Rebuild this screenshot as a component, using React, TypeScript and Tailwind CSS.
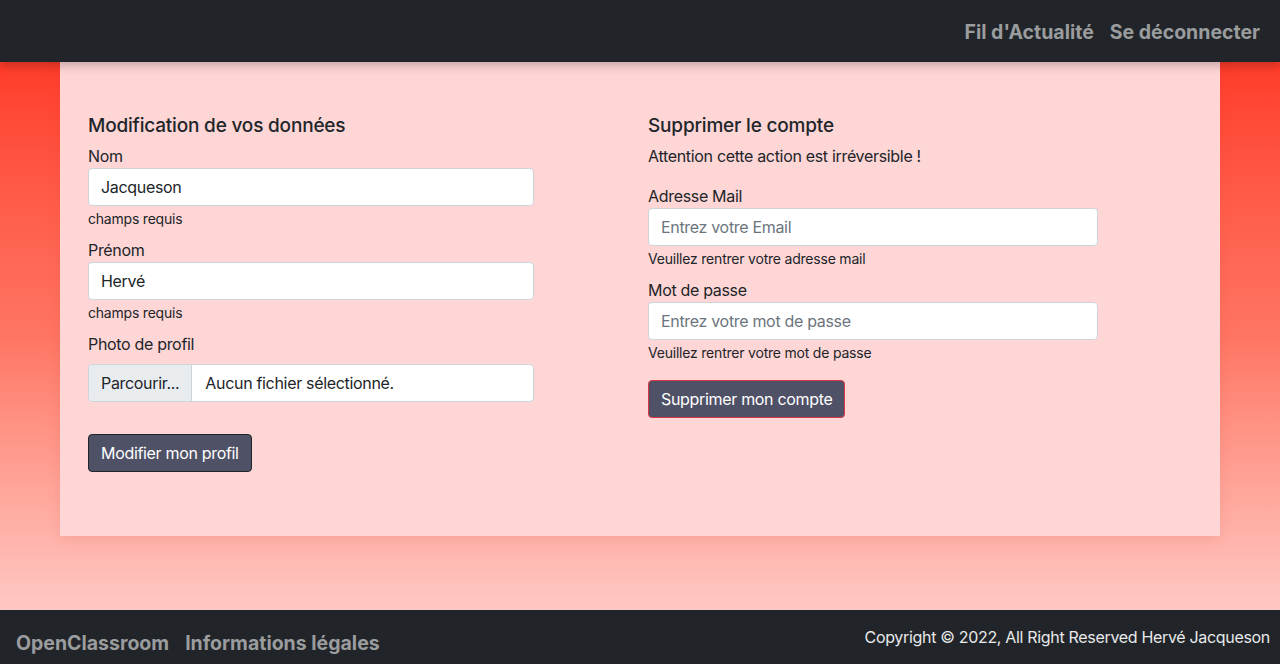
import { useState } from 'react';

const inputCls =
  'block h-[38px] w-full px-3 bg-white border border-[#ced4da] rounded-[4px] text-[16px] tracking-[-0.02em] text-[#212529] placeholder:text-[#6c757d] outline-none';

function Field({ label, help, children, gap = 'mt-[9px]' }: { label: string; help?: string; children: React.ReactNode; gap?: string }) {
  return (
    <div className={gap}>
      <label className="block text-[16px] leading-6 tracking-[-0.02em] text-[#212529]">{label}</label>
      {children}
      {help && <small className="block mt-[2px] text-[14px] leading-[21px] tracking-[-0.015em] text-[#212529]">{help}</small>}
    </div>
  );
}

export default function App() {
  const [nom, setNom] = useState('Jacqueson');
  const [prenom, setPrenom] = useState('Hervé');
  const [email, setEmail] = useState('');
  const [password, setPassword] = useState('');

  return (
    <div className="flex flex-col h-screen font-['Inter','Noto_Sans',sans-serif]">
      <nav className="relative z-10 h-[62px] shrink-0 bg-[#212529] flex items-center justify-end pr-5 pt-1 gap-4 shadow-[0_3px_10px_rgba(0,0,0,0.25)]">
        <a className="text-[19.5px] font-bold text-[#9a9c9e]">Fil d'Actualité</a>
        <a className="text-[19.5px] font-bold text-[#9a9c9e]">Se déconnecter</a>
      </nav>

      <main className="flex-1 bg-gradient-to-b from-[#ff3b29] via-[#ff7563] to-[#ffc8c4] px-[60px]">
        <div className="h-[474px] bg-[#ffd6d6] pl-7 pr-3 pt-[52px] grid grid-cols-2 shadow-[0_4px_14px_rgba(200,60,50,0.12)]">
          <section>
            <h5 className="text-[19px] leading-6 font-medium tracking-[-0.01em] text-[#212529] mb-[6px]">Modification de vos données</h5>
            <div className="w-[446px]">
              <Field label="Nom" help="champs requis" gap="">
                <input className={inputCls} value={nom} onChange={e => setNom(e.target.value)} />
              </Field>
              <Field label="Prénom" help="champs requis">
                <input className={inputCls} value={prenom} onChange={e => setPrenom(e.target.value)} />
              </Field>
              <Field label="Photo de profil">
                <div className="mt-2 flex h-[38px] border border-[#ced4da] rounded-[4px] bg-white overflow-hidden text-[16px] tracking-[-0.02em] text-[#212529]">
                  <span className="flex items-center px-3 bg-[#e9ecef] border-r border-[#ced4da]">Parcourir...</span>
                  <span className="flex items-center px-[13px]">Aucun fichier sélectionné.</span>
                </div>
              </Field>
              <button className="mt-8 h-[38px] px-3 bg-[#4f5166] border border-[#212529] rounded-[4px] text-white text-[16px] tracking-[-0.02em]">
                Modifier mon profil
              </button>
            </div>
          </section>

          <section>
            <h5 className="text-[19px] leading-6 font-medium tracking-[-0.01em] text-[#212529] mb-[6px]">Supprimer le compte</h5>
            <p className="text-[16px] leading-6 tracking-[-0.02em] text-[#212529]">Attention cette action est irréversible !</p>
            <div className="w-[450px]">
              <Field label="Adresse Mail" help="Veuillez rentrer votre adresse mail" gap="mt-4">
                <input className={inputCls} placeholder="Entrez votre Email" value={email} onChange={e => setEmail(e.target.value)} />
              </Field>
              <Field label="Mot de passe" help="Veuillez rentrer votre mot de passe">
                <input type="password" className={inputCls} placeholder="Entrez votre mot de passe" value={password} onChange={e => setPassword(e.target.value)} />
              </Field>
              <button className="mt-[17px] h-[38px] px-3 bg-[#4f5166] border border-[#dc3545] rounded-[4px] text-white text-[16px] tracking-[-0.02em]">
                Supprimer mon compte
              </button>
            </div>
          </section>
        </div>
      </main>

      <footer className="h-[54px] shrink-0 bg-[#212529] flex items-center justify-between pl-4 pr-[10px]">
        <div className="flex gap-4 pt-[14px]">
          <a className="text-[19.5px] font-bold text-[#9a9c9e]">OpenClassroom</a>
          <a className="text-[19.5px] font-bold text-[#9a9c9e]">Informations légales</a>
        </div>
        <p className="text-[16px] tracking-[-0.02em] text-[#e9e9ea]">Copyright © 2022, All Right Reserved Hervé Jacqueson</p>
      </footer>
    </div>
  );
}
